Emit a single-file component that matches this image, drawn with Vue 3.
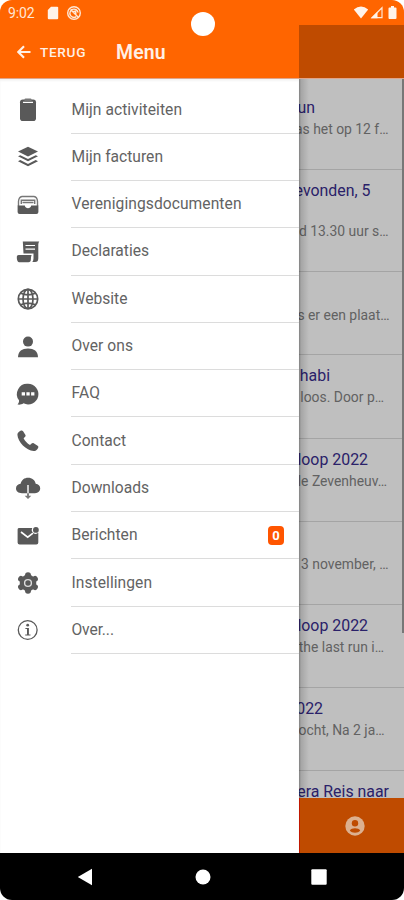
<script setup>
const menu = [
  { icon: 'clipboard', label: 'Mijn activiteiten', width: 110.5 },
  { icon: 'layers', label: 'Mijn facturen', width: 91.5 },
  { icon: 'tray', label: 'Verenigingsdocumenten', width: 170 },
  { icon: 'receipt', label: 'Declaraties', width: 77.5 },
  { icon: 'globe', label: 'Website', width: 56 },
  { icon: 'person', label: 'Over ons', width: 61.5 },
  { icon: 'chat', label: 'FAQ', width: 28.5 },
  { icon: 'phone', label: 'Contact', width: 54.5 },
  { icon: 'cloud', label: 'Downloads', width: 77.5 },
  { icon: 'mail', label: 'Berichten', width: 66, badge: '0' },
  { icon: 'gear', label: 'Instellingen', width: 80.5 },
  { icon: 'info', label: 'Over...', width: 42.5 },
]

const news = [
  { title: 'un', text: 'as het op 12 f…', height: 83, titleEnd: 16, textEnd: 89.5 },
  { title: 'evonden, 5', text: 'd 13.30 uur s…', height: 102.3, titleEnd: 71.5, textEnd: 89.5, tall: true },
  { title: '', text: 's er een plaat…', height: 82.7, titleEnd: 0, textEnd: 90.5 },
  { title: 'habi', text: 'loos. Door p…', height: 84, titleEnd: 31, textEnd: 85 },
  { title: 'loop 2022', text: 'le Zevenheuv…', height: 82.7, titleEnd: 69, textEnd: 88 },
  { title: '', text: '3 november, …', height: 83, titleEnd: 0, textEnd: 89.5 },
  { title: 'loop 2022', text: 'the last run i…', height: 83, titleEnd: 69, textEnd: 85 },
  { title: '2022', text: 'ocht, Na 2 ja…', height: 83.5, titleEnd: 24, textEnd: 85.5 },
  { title: 'era Reis naar', text: '', height: 83, titleEnd: 90, textEnd: 86 },
]
</script>

<template>
  <div class="phone">
    <header class="top">
      <div class="status">
        <span class="time">9:02</span>
        <svg class="sd" viewBox="0 0 12 14"><path d="M4 .8h6.2q1 0 1 1v10.4q0 1-1 1H1.8q-1 0-1-1V4z" /></svg>
        <svg class="dnd" viewBox="0 0 16 16"><g fill="none" stroke="#ffe7d5" stroke-width="1.4"><circle cx="8" cy="8" r="6.3" /><path d="M4.500 4.500l7.800 7.800M10.300 11.600A4.100 4.100 0 1 1 12 7.500M6.800 6.800l2.800-.6.300 3" /></g></svg>
        <span class="spacer"></span>
        <svg class="wifi" viewBox="0 0 16 13"><path d="M.8 3.5Q8-2.5 15.2 3.5L8 12.5z" /></svg>
        <svg class="signal" viewBox="0 0 13 13"><path fill="none" stroke="#ffe7d5" stroke-width="1.2" d="M2 11.7L12 1.8v9.9z" /><path d="M1 12.3L7.5 5.8v6.5z" /></svg>
        <svg class="battery" viewBox="0 0 9 13"><path d="M3 0h3v1.5h1.5q1 0 1 1V12q0 1-1 1h-6q-1 0-1-1V2.500q0-1 1-1H3z" /></svg>
      </div>
      <div class="bar">
        <svg class="back" viewBox="0 0 14 14"><path d="M13.500 7H1.800M7 1.300L1.300 7 7 12.700" /></svg>
        <span class="terug">TERUG</span>
        <span class="title">Menu</span>
      </div>
      <span class="camera"></span>
    </header>

    <main class="content">
      <nav class="drawer">
        <div v-for="item in menu" :key="item.label" class="row">
          <span class="icon">
            <svg viewBox="0 0 22 22">
              <template v-if="item.icon === 'clipboard'">
                <rect x="3" y=".5" width="16" height="21.500" rx="2.800" />
                <path d="M6 3.300h10" class="cut" />
                <rect x="7.500" y="-.5" width="7" height="3.200" rx="1" fill="#777" />
              </template>
              <template v-else-if="item.icon === 'layers'">
                <path d="M11 .8l10 4.800-10 5-10-5z" />
                <path d="M1 10.300l2.300-1.100L11 13l7.700-3.800 2.300 1.100-10 5zM1 15.200l2.300-1.100 7.700 3.800 7.700-3.800 2.300 1.100-10 5z" />
              </template>
              <template v-else-if="item.icon === 'tray'">
                <path class="line" d="M1.500 12V7.500Q1.800 3 5 2.500h12q3.300.5 3.500 5V12M4.300 10V6.200h13.400V10M5.500 8.500h11" />
                <path d="M.6 11.500h7.200c.5 3.700 5.900 3.700 6.400 0h7.200v6.500q0 2-2 2H2.600q-2 0-2-2z" />
              </template>
              <template v-else-if="item.icon === 'receipt'">
                <path d="M5.800.5h16.500q-1 .9-1 3v14q0 3.500-3.300 3.500h-2.700q1.200-1.300 1.200-3.500v-5H6.500z" />
                <path d="M-.2 15.700q0-1.700 1.800-1.700h13q-.8 2-.7 4 0 3.300-2.500 3.300H2Q-.3 20.500-.2 15.700z" />
                <path class="cut" d="M8.500 4.500h9.500M8.500 8.200h9.500" />
              </template>
              <template v-else-if="item.icon === 'globe'">
                <g fill="none" stroke="#595959" stroke-width="1.700"><circle cx="11" cy="11" r="9.700" /><ellipse cx="11" cy="11" rx="5" ry="9.700" /><path d="M11 1v20M1 11h20M3.200 5q7.800 3.800 15.600 0M3.200 17q7.800-3.800 15.600 0" /></g>
              </template>
              <template v-else-if="item.icon === 'person'">
                <circle cx="11" cy="5.600" r="5" />
                <path d="M1 21.300c.2-6 4-8.700 10-8.700s9.800 2.700 10 8.700z" />
              </template>
              <template v-else-if="item.icon === 'chat'">
                <path d="M11 .8a10.300 10.300 0 1 1-4.500 19.500c-2 1.400-4 1.600-6 1.300 1.200-1.400 1.700-2.700 1.500-4.300A10.300 10.300 0 0 1 11 .8z" />
                <path fill="#fff" d="M4.700 9.300H8v3.200H4.700zM9.400 9.300h3.300v3.200H9.400zM14.100 9.300h3.300v3.200h-3.300z" />
              </template>
              <template v-else-if="item.icon === 'phone'">
                <path d="M4 .6c.8-.4 1.500-.1 2.100.7l2.200 3.400c.5.900.4 1.500-.4 2.200L6.600 8.200c1.200 2.600 3.700 5.200 6.400 6.700l1.600-1.500c.7-.6 1.300-.7 2.100-.2l3.900 2.600c.9.600 1 1.300.5 2.100-1 1.800-2.600 3.300-4.500 3.200C9.300 20.400.8 12 .4 4.700.4 2.900 2.200 1.400 4 .6z" />
              </template>
              <template v-else-if="item.icon === 'cloud'">
                <path d="M5 16.200C1.200 16.200-1 14.200-1 11.500c0-2.700 2-4.400 4.600-4.700C4.500 2.800 7.500.7 11 .7c4.200 0 7 2.400 7.700 6 2.700.2 4.500 2 4.500 4.600 0 2.900-2 4.900-5.200 4.900z" />
                <path fill="none" stroke="#fff" stroke-width="1.400" d="M11 8v8.500" />
                <path fill="#777" d="M10.100 16.200h1.800v2.500h2.400L11 22l-3.300-3.300h2.400z" />
              </template>
              <template v-else-if="item.icon === 'mail'">
                <path d="M1.800 3h13.500a3.900 3.900 0 0 0 6 4.800v9.700q0 2-2 2H2.600q-2 0-2-2V4.500Q.6 3 1.800 3z" />
                <circle cx="18.900" cy="4.900" r="2.900" />
                <path fill="none" stroke="#fff" stroke-width="1.600" d="M4 7l6.700 5.200 5.300-4" />
              </template>
              <template v-else-if="item.icon === 'gear'">
                <g stroke="#595959" stroke-width="6" stroke-linecap="round"><path d="M11 3.300v15.400M4.100 7l13.800 8M17.900 7L4.100 15" /></g>
                <circle cx="11" cy="11" r="8.300" />
                <circle cx="11" cy="11" r="3.400" fill="none" stroke="#ddd" stroke-width="1.400" />
              </template>
              <template v-else>
                <circle cx="10.700" cy="11" r="9.400" fill="none" stroke="#595959" stroke-width="1.300" />
                <circle cx="10.700" cy="6.200" r="1.400" />
                <path d="M8.400 9h3.500v6.500h1.600v1H8.200v-1H10V10H8.400z" />
              </template>
            </svg>
          </span>
          <div class="line-box">
            <svg class="label" height="24" :width="item.width + 4"><text x=".5" y="17" :textLength="item.width">{{ item.label }}</text></svg>
            <span v-if="item.badge" class="badge">{{ item.badge }}</span>
          </div>
        </div>
      </nav>

      <section class="behind">
        <div class="news">
          <article v-for="(n, i) in news" :key="i" class="item" :class="{ tall: n.tall }" :style="{ height: n.height + 'px' }">
            <div class="head"><span :style="{ width: n.titleEnd + 'px' }">{{ n.title }}</span></div>
            <div class="sub"><span :style="{ width: n.textEnd + 'px' }">{{ n.text }}</span></div>
          </article>
        </div>
        <span class="scroll"></span>
        <footer class="tab">
          <svg viewBox="0 0 20 20"><circle cx="10" cy="10" r="9.700" /><circle cx="10" cy="7.200" r="3.200" class="hole" /><path class="hole" d="M4.800 14.500c1.500-3 8.900-3 10.400 0-2 2.900-8.400 2.900-10.400 0z" /></svg>
        </footer>
      </section>
    </main>

    <footer class="nav">
      <svg viewBox="0 0 16 18"><path d="M15 .8v16.400L.8 9z" /></svg>
      <svg viewBox="0 0 16 16"><circle cx="8" cy="8" r="7.500" /></svg>
      <svg viewBox="0 0 16 16"><rect x=".3" y=".3" width="15.400" height="15.400" rx="1" /></svg>
    </footer>
  </div>
</template>

<style>
body { background: #fff; }
</style>

<style scoped>
.phone { position: relative; display: flex; flex-direction: column; width: 404px; height: 900px; overflow: hidden; border-radius: 12px; background: #fff; font-family: Roboto, sans-serif; }
.top { position: relative; height: 79px; flex: none; background: linear-gradient(#bf4b00, #bf4b00) 299px 25px / 105px 54px no-repeat #ff6500; border-bottom: 1px solid #dfa58b; box-sizing: border-box; }
.status { display: flex; align-items: center; height: 25px; padding: 0 7px 0 8px; fill: #fff3ea; }
.time { width: 28px; color: #ffe7d5; font-size: 14px; letter-spacing: -.1px; white-space: nowrap; }
.sd { width: 12px; height: 14px; margin-left: 11px; }
.dnd { width: 16px; height: 16px; margin-left: 7px; }
.spacer { flex: 1; }
.wifi { width: 16px; height: 13px; }
.signal { width: 13px; height: 13px; margin-left: 1px; }
.battery { width: 9px; height: 13px; margin-left: 5px; }
.bar { display: flex; align-items: center; height: 53px; padding-left: 17px; color: #fff0e6; }
.back { width: 14px; height: 14px; fill: none; stroke: #fff0e6; stroke-width: 2.200; }
.terug { width: 76px; margin-left: 9px; font-size: 13.600px; font-weight: 500; letter-spacing: .7px; }
.title { padding-top: 1px; font-size: 19.400px; font-weight: 600; letter-spacing: .2px; }
.camera { position: absolute; left: 191px; top: 12px; width: 24px; height: 24px; border-radius: 50%; background: #fff; }
.content { display: flex; height: 774px; flex: none; }
.drawer { width: 299px; box-sizing: border-box; padding-top: 7.400px; background: #fff; box-shadow: inset 0 2px 2px #f4f4f4; }
.row { display: flex; height: 47.300px; }
.icon { display: flex; align-items: center; width: 71px; box-sizing: border-box; padding: 0 0 0 17px; }
.icon svg { width: 22px; height: 22px; fill: #595959; overflow: visible; }
.cut { fill: none; stroke: #fff; stroke-width: 1.200; }
.line { fill: none; stroke: #777; stroke-width: 1.400; }
.line-box { display: flex; align-items: center; flex: 1; border-bottom: 1px solid #dcdcdc; }
.label { font-size: 15.600px; fill: #636363; }
.badge { width: 16px; height: 19px; margin: 0 15px 0 auto; border-radius: 4px; background: #ff5500; color: #fff; font-size: 13px; font-weight: 700; line-height: 19px; text-align: center; }
.behind { position: relative; display: flex; flex-direction: column; width: 105px; background: #bfbfbf; }
.behind::before { content: ''; position: absolute; z-index: 2; left: 0; top: 0; width: 10px; height: 719px; background: linear-gradient(90deg, #0005, #0002 2px, #0000); }
.news { height: 719px; overflow: hidden; padding-top: 8px; box-sizing: border-box; }
.item { display: flex; flex-direction: column; box-sizing: border-box; padding-top: 10.300px; border-bottom: 1px solid #a4a4a4; }
.head, .sub { flex: none; overflow: hidden; white-space: nowrap; }
.head { height: 21px; color: #2a2169; font-size: 15.900px; line-height: 21px; }
.tall .head { margin-bottom: 19px; }
.sub { height: 22px; color: #626262; font-size: 13.900px; line-height: 22px; }
.head span, .sub span { display: flex; justify-content: flex-end; }
.scroll { position: absolute; right: 0; top: 0; width: 2px; height: 554px; background: #777; }
.tab { display: flex; align-items: center; height: 55px; box-sizing: border-box; padding-left: 45px; background: #bf4b00; border-left: 1px solid #c01800; }
.tab svg { width: 20px; height: 20px; fill: #dcb08f; }
.tab .hole { fill: #bf4b00; }
.nav { display: flex; align-items: center; height: 47px; flex: none; background: #000; fill: #fff; }
.nav svg { width: 16px; height: 16px; }
.nav svg:nth-child(1) { height: 18px; margin-left: 77px; }
.nav svg:nth-child(2) { margin-left: 102px; }
.nav svg:nth-child(3) { margin-left: 100px; }
</style>
